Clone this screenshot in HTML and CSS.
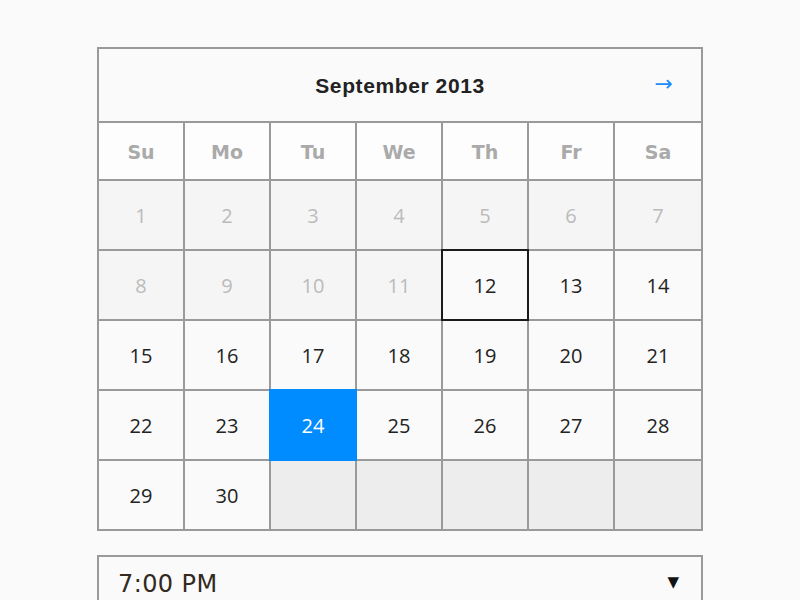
FILE: index.html
```html
<!DOCTYPE html>
<html>
<head>
<meta charset="utf-8">
<link rel="stylesheet" href="styles.css">
</head>
<body>
<div class="page">
  <div class="calendar">
    <div class="cal-header">
      <span class="title">September 2013</span>
      <span class="next">&#8594;</span>
    </div>
    <div class="grid">
      <div class="wd">Su</div><div class="wd">Mo</div><div class="wd">Tu</div><div class="wd">We</div><div class="wd">Th</div><div class="wd">Fr</div><div class="wd">Sa</div>
      <div class="day past">1</div><div class="day past">2</div><div class="day past">3</div><div class="day past">4</div><div class="day past">5</div><div class="day past">6</div><div class="day past">7</div>
      <div class="day past">8</div><div class="day past">9</div><div class="day past">10</div><div class="day past">11</div><div class="day today">12</div><div class="day">13</div><div class="day">14</div>
      <div class="day">15</div><div class="day">16</div><div class="day">17</div><div class="day">18</div><div class="day">19</div><div class="day">20</div><div class="day">21</div>
      <div class="day">22</div><div class="day">23</div><div class="day selected">24</div><div class="day">25</div><div class="day">26</div><div class="day">27</div><div class="day">28</div>
      <div class="day">29</div><div class="day">30</div><div class="day empty"></div><div class="day empty"></div><div class="day empty"></div><div class="day empty"></div><div class="day empty"></div>
    </div>
  </div>
  <div class="time-select">
    <span class="time">7:00 PM</span>
    <span class="caret">&#9660;</span>
  </div>
</div>
</body>
</html>
```

FILE: styles.css
```css
html, body {
  margin: 0;
  padding: 0;
  background: #fafafa;
}
body {
  font-family: "Open Sans", "DejaVu Sans", sans-serif;
  overflow: hidden;
  height: 600px;
}
.page {
  padding: 47px 0 0 97px;
}
.calendar {
  width: 606px;
  box-sizing: border-box;
  border: 2px solid #9a9a9c;
  background: #9a9a9c;
}
.cal-header {
  height: 72px;
  background: #fafafa;
  display: flex;
  align-items: center;
  justify-content: center;
  position: relative;
  border-bottom: 2px solid #9a9a9c;
}
.title {
  font-family: "Liberation Sans", Arial, sans-serif;
  font-weight: bold;
  font-size: 21px;
  letter-spacing: 0.6px;
  color: #222;
  padding-top: 1px;
}
.next {
  position: absolute;
  right: 28px;
  top: 22px;
  font-family: "DejaVu Sans", sans-serif;
  font-size: 22px;
  color: #1a8cff;
}
.grid {
  display: grid;
  grid-template-columns: repeat(6, 84px) 86px;
  grid-template-rows: 56px repeat(5, 68px);
  gap: 2px;
}
.wd {
  background: #fdfdfd;
  display: flex;
  align-items: center;
  justify-content: center;
  font-family: "DejaVu Sans", sans-serif;
  font-weight: bold;
  font-size: 19px;
  color: #aaaaaa;
  padding-top: 2px;
  box-sizing: border-box;
}
.day {
  background: #fafafa;
  display: flex;
  align-items: center;
  justify-content: center;
  font-size: 20px;
  color: #222;
  position: relative;
}
.day.past {
  background: #f5f5f5;
  color: #bbbbbb;
}
.day.empty {
  background: #ededed;
}
.day.today {
  outline: 2px solid #1a1a1a;
  z-index: 1;
}
.day.selected {
  background: #008cff;
  outline: 2px solid #008cff;
  color: #fff;
  z-index: 1;
}
.time-select {
  margin-top: 24px;
  width: 606px;
  height: 60px;
  box-sizing: border-box;
  border: 2px solid #9a9a9c;
  background: #fafafa;
  display: flex;
  align-items: flex-start;
  justify-content: space-between;
  padding: 13px 22px 0 19px;
}
.time {
  font-family: "DejaVu Sans", sans-serif;
  font-size: 24px;
  letter-spacing: 0.4px;
  color: #33291f;
}
.caret {
  font-family: "DejaVu Sans", sans-serif;
  font-size: 15px;
  color: #111;
  margin-top: 3px;
}
```
